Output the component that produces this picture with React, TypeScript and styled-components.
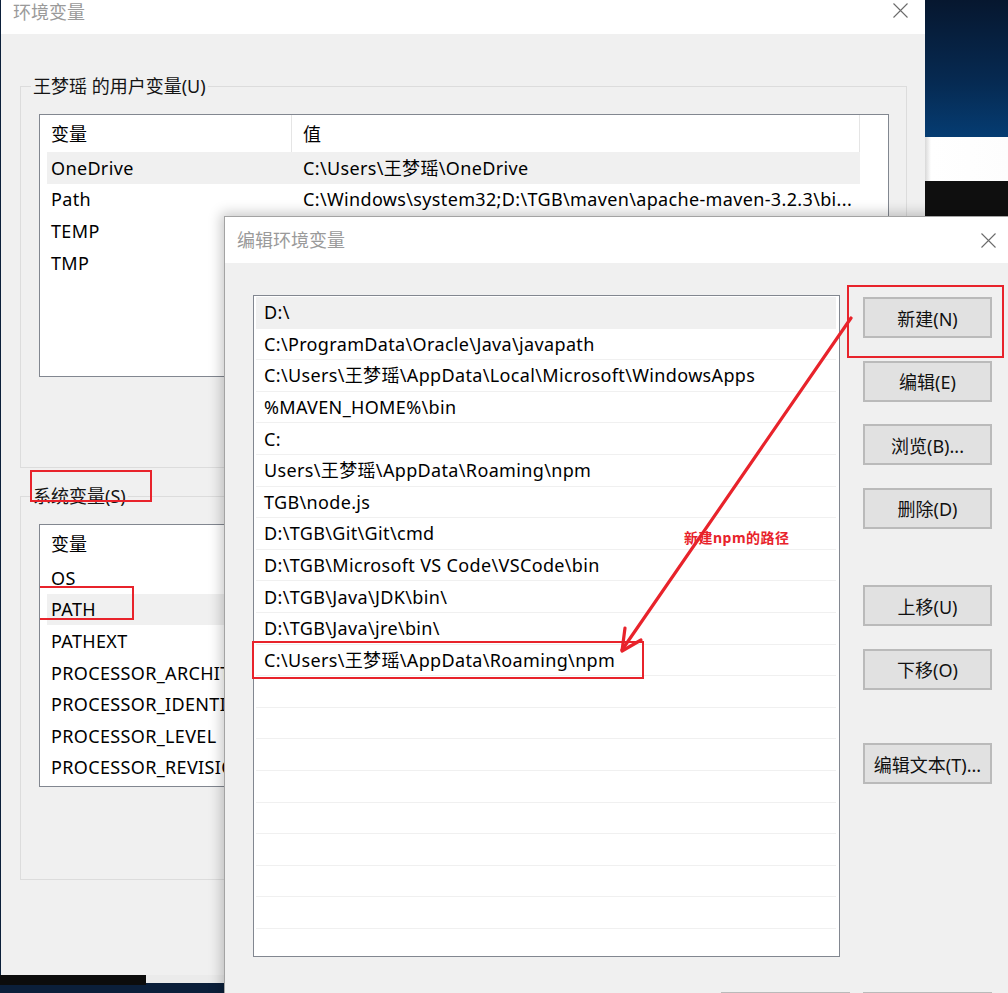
import React from "react";
import styled, { createGlobalStyle } from "styled-components";

const RED = "#e8232b";
const FONT = `"Noto Sans", "Noto Sans CJK SC", sans-serif`;

const GlobalStyle = createGlobalStyle`
  html, body {
    margin: 0;
    padding: 0;
    background: #0b1f3a;
  }
  body {
    font-family: ${FONT};
  }
  * {
    box-sizing: border-box;
  }
`;

const Screen = styled.div`
  position: relative;
  width: 1008px;
  height: 993px;
  overflow: hidden;
  display: flex;
  background: #0b1f3a;
  font-family: ${FONT};
  color: #000;
`;

const LeftColumn = styled.div`
  display: flex;
  flex-direction: column;
  padding-left: 1px;
`;

const BottomStrip = styled.div`
  display: flex;
  align-items: flex-start;
  margin-left: -1px;
`;

const StripPiece = styled.div<{ $w: number; $h: number; $bg: string }>`
  width: ${(p) => p.$w}px;
  height: ${(p) => p.$h}px;
  background: ${(p) => p.$bg};
`;

const RightStrip = styled.div`
  flex: 1;
  display: flex;
  flex-direction: column;
`;

const Sky = styled.div`
  height: 137px;
  background: linear-gradient(180deg, #06172f 0%, #062a52 60%, #053c72 100%);
`;

const WhiteBand = styled.div`
  height: 44px;
  background: linear-gradient(90deg, #d8d8d8 0px, #ffffff 6px, #fdfdfd 100%);
`;

const DarkBand = styled.div`
  height: 40px;
  background: #0f0f0f;
`;

/* ---------- outer window ---------- */

const OuterWindow = styled.div`
  width: 924px;
  height: 975px;
  background: #f0f0f0;
  display: flex;
  flex-direction: column;
`;

const TitleBar = styled.div<{ $h: number }>`
  height: ${(p) => p.$h}px;
  background: #fff;
  display: flex;
  align-items: center;
  justify-content: space-between;
  flex-shrink: 0;
`;

const OuterTitleBar = styled(TitleBar)`
  align-items: flex-start;
  padding: 0 17px 0 12px;
`;

const TitleText = styled.div`
  font-size: 18px;
  line-height: 24px;
  color: #9a9a9a;
`;

const CloseBox = styled.div<{ $top: number }>`
  display: flex;
  margin-top: ${(p) => p.$top}px;
`;

const OuterBody = styled.div`
  padding: 40px 18px 0 19px;
  display: flex;
  flex-direction: column;
  gap: 16px;
`;

const Group = styled.fieldset<{ $bottom: number }>`
  margin: 0;
  min-width: 0;
  padding: 16px 16px ${(p) => p.$bottom}px 18px;
  border: 1px solid #dcdcdc;
`;

const GroupLegend = styled.legend`
  position: relative;
  margin-left: -8px;
  padding: 0 2px;
  font-size: 18px;
  line-height: 24px;
  color: #141414;
`;

const VarList = styled.div`
  width: 850px;
  height: 263px;
  background: #fff;
  border: 1px solid #828790;
  overflow: hidden;
`;

const VarRow = styled.div<{ $header?: boolean; $selected?: boolean }>`
  position: relative;
  display: grid;
  grid-template-columns: 245px 1fr;
  margin: 0 28px 0 7px;
  height: ${(p) => (p.$header ? 37 : 31.6)}px;
  align-items: center;
  font-size: 18px;
  line-height: 24px;
  letter-spacing: ${(p) => (p.$header ? 0 : 0.35)}px;
  background: ${(p) => (p.$selected ? "#f0f0f0" : "#fff")};
`;

const VarCell = styled.div<{ $header?: boolean; $first?: boolean }>`
  height: 100%;
  display: flex;
  align-items: center;
  padding-left: ${(p) => (p.$first ? 4 : 11)}px;
  white-space: nowrap;
  overflow: hidden;
  border-right: ${(p) => (p.$header ? "1px solid #e5e5e5" : "none")};
`;

const RedBox = styled.div<{ $l: number; $t: number; $w: number; $h: number }>`
  position: absolute;
  z-index: 2;
  left: ${(p) => p.$l}px;
  top: ${(p) => p.$t}px;
  width: ${(p) => p.$w}px;
  height: ${(p) => p.$h}px;
  border: 2px solid ${RED};
  pointer-events: none;
`;

/* ---------- edit dialog ---------- */

const EditDialog = styled.div`
  position: absolute;
  left: 224px;
  top: 216px;
  width: 785px;
  height: 800px;
  background: #f0f0f0;
  border: 1px solid #a3a3a3;
  box-shadow: 0 0 12px 3px rgba(0, 0, 0, 0.22);
  display: flex;
  flex-direction: column;
`;

const EditTitleBar = styled(TitleBar)`
  padding: 0 12px 0 12px;
`;

const EditBody = styled.div`
  padding: 32px 0 0 28px;
  display: flex;
  flex-direction: column;
`;

const EditMain = styled.div`
  display: flex;
  align-items: flex-start;
  gap: 23px;
`;

const PathList = styled.div`
  width: 587px;
  height: 662px;
  background: #fff;
  border: 1px solid #828790;
  padding: 1px 3px 0 2px;
`;

const PathRow = styled.div<{ $selected?: boolean }>`
  position: relative;
  height: 31.6px;
  padding-left: 8px;
  display: flex;
  align-items: center;
  font-size: 18px;
  line-height: 24px;
  letter-spacing: 0.35px;
  white-space: nowrap;
  border-bottom: 1px solid #f0f0f0;
  background: ${(p) => (p.$selected ? "#f0f0f0" : "#fff")};
`;

const ButtonColumn = styled.div`
  display: flex;
  flex-direction: column;
  padding-top: 2px;
`;

const WinButton = styled.div<{ $gap?: number }>`
  position: relative;
  width: 129px;
  height: 41px;
  margin-top: ${(p) => p.$gap ?? 0}px;
  background: #e1e1e1;
  border: 2px solid #bababa;
  display: flex;
  align-items: center;
  justify-content: center;
  font-size: 18px;
  color: #111;
`;

const Footer = styled.div`
  width: 739px;
  margin-top: 35px;
  display: flex;
  justify-content: flex-end;
  gap: 13px;
`;

const Note = styled.div`
  position: absolute;
  left: 684px;
  top: 529px;
  font-size: 14px;
  line-height: 18px;
  letter-spacing: 0.5px;
  font-weight: 700;
  color: ${RED};
  white-space: nowrap;
`;

const Overlay = styled.svg`
  position: absolute;
  left: 0;
  top: 0;
  pointer-events: none;
`;

const CloseIcon = () => (
  <svg width="15" height="15" viewBox="0 0 15 15">
    <path d="M0.5 0.5 L14.5 14.5 M14.5 0.5 L0.5 14.5" stroke="#6b6b6b" strokeWidth="1.1" fill="none" />
  </svg>
);

const userVars = [
  { name: "OneDrive", value: "C:\\Users\\王梦瑶\\OneDrive" },
  { name: "Path", value: "C:\\Windows\\system32;D:\\TGB\\maven\\apache-maven-3.2.3\\bi..." },
  { name: "TEMP", value: "%USERPROFILE%\\AppData\\Local\\Temp" },
  { name: "TMP", value: "%USERPROFILE%\\AppData\\Local\\Temp" },
];

const systemVars = [
  { name: "OS", value: "Windows_NT" },
  { name: "PATH", value: "C:\\ProgramData\\Oracle\\Java\\javapath" },
  { name: "PATHEXT", value: ".COM;.EXE;.BAT;.CMD;.VBS;.VBE;.JS;.JSE;.WSF;.WSH;.MSC" },
  { name: "PROCESSOR_ARCHITECTURE", value: "AMD64" },
  { name: "PROCESSOR_IDENTIFIER", value: "Intel64 Family 6 Model 142" },
  { name: "PROCESSOR_LEVEL", value: "6" },
  { name: "PROCESSOR_REVISION", value: "8e09" },
];

const pathEntries = [
  "D:\\",
  "C:\\ProgramData\\Oracle\\Java\\javapath",
  "C:\\Users\\王梦瑶\\AppData\\Local\\Microsoft\\WindowsApps",
  "%MAVEN_HOME%\\bin",
  "C:",
  "Users\\王梦瑶\\AppData\\Roaming\\npm",
  "TGB\\node.js",
  "D:\\TGB\\Git\\Git\\cmd",
  "D:\\TGB\\Microsoft VS Code\\VSCode\\bin",
  "D:\\TGB\\Java\\JDK\\bin\\",
  "D:\\TGB\\Java\\jre\\bin\\",
  "C:\\Users\\王梦瑶\\AppData\\Roaming\\npm",
];
const paddedEntries = [...pathEntries, ...Array(20 - pathEntries.length).fill("")];

const sideButtons = [
  { label: "新建(N)", gap: 0, marked: true },
  { label: "编辑(E)", gap: 22.5 },
  { label: "浏览(B)...", gap: 22.5 },
  { label: "删除(D)", gap: 22.5 },
  { label: "上移(U)", gap: 56.5 },
  { label: "下移(O)", gap: 22.5 },
  { label: "编辑文本(T)...", gap: 53.5 },
];

const App = () => {
  return (
    <Screen>
      <GlobalStyle />
      <LeftColumn>
        <OuterWindow>
          <OuterTitleBar $h={34}>
            <TitleText>环境变量</TitleText>
            <CloseBox $top={3}>
              <CloseIcon />
            </CloseBox>
          </OuterTitleBar>
          <OuterBody>
            <Group $bottom={90}>
              <GroupLegend>王梦瑶 的用户变量(U)</GroupLegend>
              <VarList>
                <VarRow $header>
                  <VarCell $header $first>变量</VarCell>
                  <VarCell $header>值</VarCell>
                </VarRow>
                {userVars.map((v, i) => (
                  <VarRow key={v.name} $selected={i === 0}>
                    <VarCell $first>{v.name}</VarCell>
                    <VarCell>{v.value}</VarCell>
                  </VarRow>
                ))}
              </VarList>
            </Group>
            <Group $bottom={92}>
              <GroupLegend>
                系统变量(S)
                <RedBox $l={-1} $t={-14} $w={122} $h={32} />
              </GroupLegend>
              <VarList>
                <VarRow $header>
                  <VarCell $header $first>变量</VarCell>
                  <VarCell $header>值</VarCell>
                </VarRow>
                {systemVars.map((v) => (
                  <VarRow key={v.name} $selected={v.name === "PATH"}>
                    <VarCell $first>{v.name}</VarCell>
                    <VarCell>{v.value}</VarCell>
                    {v.name === "PATH" && <RedBox $l={-11} $t={-8} $w={98} $h={34} />}
                  </VarRow>
                ))}
              </VarList>
            </Group>
          </OuterBody>
        </OuterWindow>
        <BottomStrip>
          <StripPiece $w={146} $h={10} $bg="#0c0c0c" />
          <StripPiece $w={80} $h={8} $bg="#ebebeb" />
        </BottomStrip>
      </LeftColumn>
      <RightStrip>
        <Sky />
        <WhiteBand />
        <DarkBand />
      </RightStrip>

      <EditDialog>
        <EditTitleBar $h={46}>
          <TitleText>编辑环境变量</TitleText>
          <CloseBox $top={0}>
            <CloseIcon />
          </CloseBox>
        </EditTitleBar>
        <EditBody>
          <EditMain>
            <PathList>
              {paddedEntries.map((entry, i) => (
                <PathRow key={i} $selected={i === 0}>
                  {entry}
                  {i === pathEntries.length - 1 && <RedBox $l={-4} $t={-4} $w={392} $h={38} />}
                </PathRow>
              ))}
            </PathList>
            <ButtonColumn>
              {sideButtons.map((b) => (
                <WinButton key={b.label} $gap={b.gap}>
                  {b.label}
                  {b.marked && <RedBox $l={-18} $t={-14} $w={157} $h={73} />}
                </WinButton>
              ))}
            </ButtonColumn>
          </EditMain>
          <Footer>
            <WinButton />
            <WinButton />
          </Footer>
        </EditBody>
      </EditDialog>

      <Note>新建npm的路径</Note>
      <Overlay width="1008" height="993" viewBox="0 0 1008 993">
        <g stroke={RED} strokeWidth="3.2" strokeLinecap="round" strokeLinejoin="round" fill="none">
          <path d="M851 318 L622 650" />
          <path d="M641 640 L622 651 L625 628" />
        </g>
      </Overlay>
    </Screen>
  );
};

export default App;
